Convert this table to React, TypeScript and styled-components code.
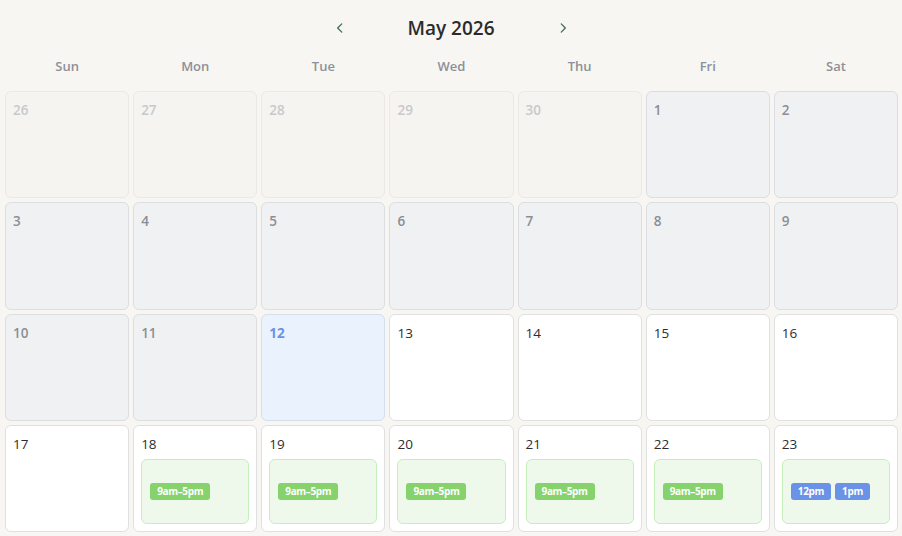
import React from "react";
import styled, { createGlobalStyle, css } from "styled-components";

const Global = createGlobalStyle`
  html, body { margin: 0; padding: 0; background: #f7f6f2; }
  body { font-family: "Open Sans", "Noto Sans", sans-serif; }
  * { box-sizing: border-box; }
`;

type Kind = "outside" | "past" | "today" | "future";

const Page = styled.div`
  height: 536px;
  display: flex;
  flex-direction: column;
  background: #f7f6f2;
`;

const Header = styled.div`
  height: 56px;
  display: flex;
  align-items: center;
  justify-content: center;
`;

const NavButton = styled.button`
  width: 28px;
  height: 28px;
  border: none;
  background: transparent;
  color: #3f6c55;
  display: flex;
  align-items: center;
  justify-content: center;
  padding: 0;
  cursor: pointer;
`;

const Title = styled.h1`
  width: 195px;
  margin: 0;
  text-align: center;
  font-size: 19px;
  font-weight: 600;
  color: #2b2b2d;
  line-height: 28px;
`;

const WeekRow = styled.div`
  display: grid;
  grid-template-columns: repeat(7, 1fr);
  column-gap: 4px;
  padding: 0 4px 0 5px;
  height: 20px;
  margin-bottom: 15px;
`;

const WeekDay = styled.div`
  text-align: center;
  font-size: 13px;
  font-weight: 600;
  color: #8d9099;
  line-height: 20px;
`;

const Grid = styled.div`
  flex: 1;
  display: grid;
  grid-template-columns: repeat(7, minmax(0, 1fr));
  grid-template-rows: repeat(4, minmax(0, 1fr));
  gap: 4px;
  padding: 0 4px 4px 5px;
`;

const kindStyles: Record<Kind, ReturnType<typeof css>> = {
  outside: css`
    background: #f5f4f1;
    border-color: #ebe9e5;
  `,
  past: css`
    background: #f0f1f3;
    border-color: #dcdde1;
  `,
  today: css`
    background: #eaf2fd;
    border-color: #d3deee;
  `,
  future: css`
    background: #ffffff;
    border-color: #e0e0e0;
  `,
};

const Cell = styled.div<{ $kind: Kind }>`
  border: 1px solid;
  border-radius: 6px;
  padding: 7px;
  display: flex;
  flex-direction: column;
  min-width: 0;
  ${(p) => kindStyles[p.$kind]}
`;

const numColor: Record<Kind, string> = {
  outside: "#c9c9c9",
  past: "#8b8e95",
  today: "#6a92e6",
  future: "#2d2d2f",
};

const DayNum = styled.div<{ $kind: Kind }>`
  font-size: 13.5px;
  line-height: 22px;
  height: 22px;
  color: ${(p) => numColor[p.$kind]};
  font-weight: ${(p) =>
    p.$kind === "today" ? 700 : p.$kind === "future" ? 400 : 600};
`;

const EventBox = styled.div`
  flex: 1;
  margin-top: 4px;
  border: 1px solid #c4efbd;
  border-radius: 6px;
  background: #eef9ec;
  display: flex;
  align-items: center;
  gap: 4px;
  padding: 0 8px;
`;

const Badge = styled.span<{ $tone: "green" | "blue" }>`
  height: 17px;
  line-height: 17px;
  padding: 0 7px;
  border-radius: 3px;
  font-size: 10px;
  font-weight: 700;
  color: #ffffff;
  letter-spacing: -0.35px;
  background: ${(p) => (p.$tone === "green" ? "#86d36e" : "#6a92e6")};
`;

const Chevron = ({ dir }: { dir: "left" | "right" }) => (
  <svg width="14" height="14" viewBox="0 0 24 24" fill="none" stroke="currentColor" strokeWidth="2.2" strokeLinecap="round" strokeLinejoin="round">
    {dir === "left" ? <path d="M15 5l-7 7 7 7" /> : <path d="M9 5l7 7-7 7" />}
  </svg>
);

const weekdays = ["Sun", "Mon", "Tue", "Wed", "Thu", "Fri", "Sat"];

type Day = { n: number; kind: Kind; events?: { label: string; tone: "green" | "blue" }[] };

const work = [{ label: "9am–5pm", tone: "green" as const }];

const days: Day[] = [
  ...[26, 27, 28, 29, 30].map((n) => ({ n, kind: "outside" as Kind })),
  ...Array.from({ length: 11 }, (_, i) => ({ n: i + 1, kind: "past" as Kind })),
  { n: 12, kind: "today" },
  { n: 13, kind: "future" },
  { n: 14, kind: "future" },
  { n: 15, kind: "future" },
  { n: 16, kind: "future" },
  { n: 17, kind: "future" },
  { n: 18, kind: "future", events: work },
  { n: 19, kind: "future", events: work },
  { n: 20, kind: "future", events: work },
  { n: 21, kind: "future", events: work },
  { n: 22, kind: "future", events: work },
  {
    n: 23,
    kind: "future",
    events: [
      { label: "12pm", tone: "blue" },
      { label: "1pm", tone: "blue" },
    ],
  },
];

export default function App() {
  return (
    <>
      <Global />
      <Page>
        <Header>
          <NavButton aria-label="Previous month">
            <Chevron dir="left" />
          </NavButton>
          <Title>May 2026</Title>
          <NavButton aria-label="Next month">
            <Chevron dir="right" />
          </NavButton>
        </Header>
        <WeekRow>
          {weekdays.map((d) => (
            <WeekDay key={d}>{d}</WeekDay>
          ))}
        </WeekRow>
        <Grid>
          {days.map((d, i) => (
            <Cell key={i} $kind={d.kind}>
              <DayNum $kind={d.kind}>{d.n}</DayNum>
              {d.events && (
                <EventBox>
                  {d.events.map((e) => (
                    <Badge key={e.label} $tone={e.tone}>
                      {e.label}
                    </Badge>
                  ))}
                </EventBox>
              )}
            </Cell>
          ))}
        </Grid>
      </Page>
    </>
  );
}
